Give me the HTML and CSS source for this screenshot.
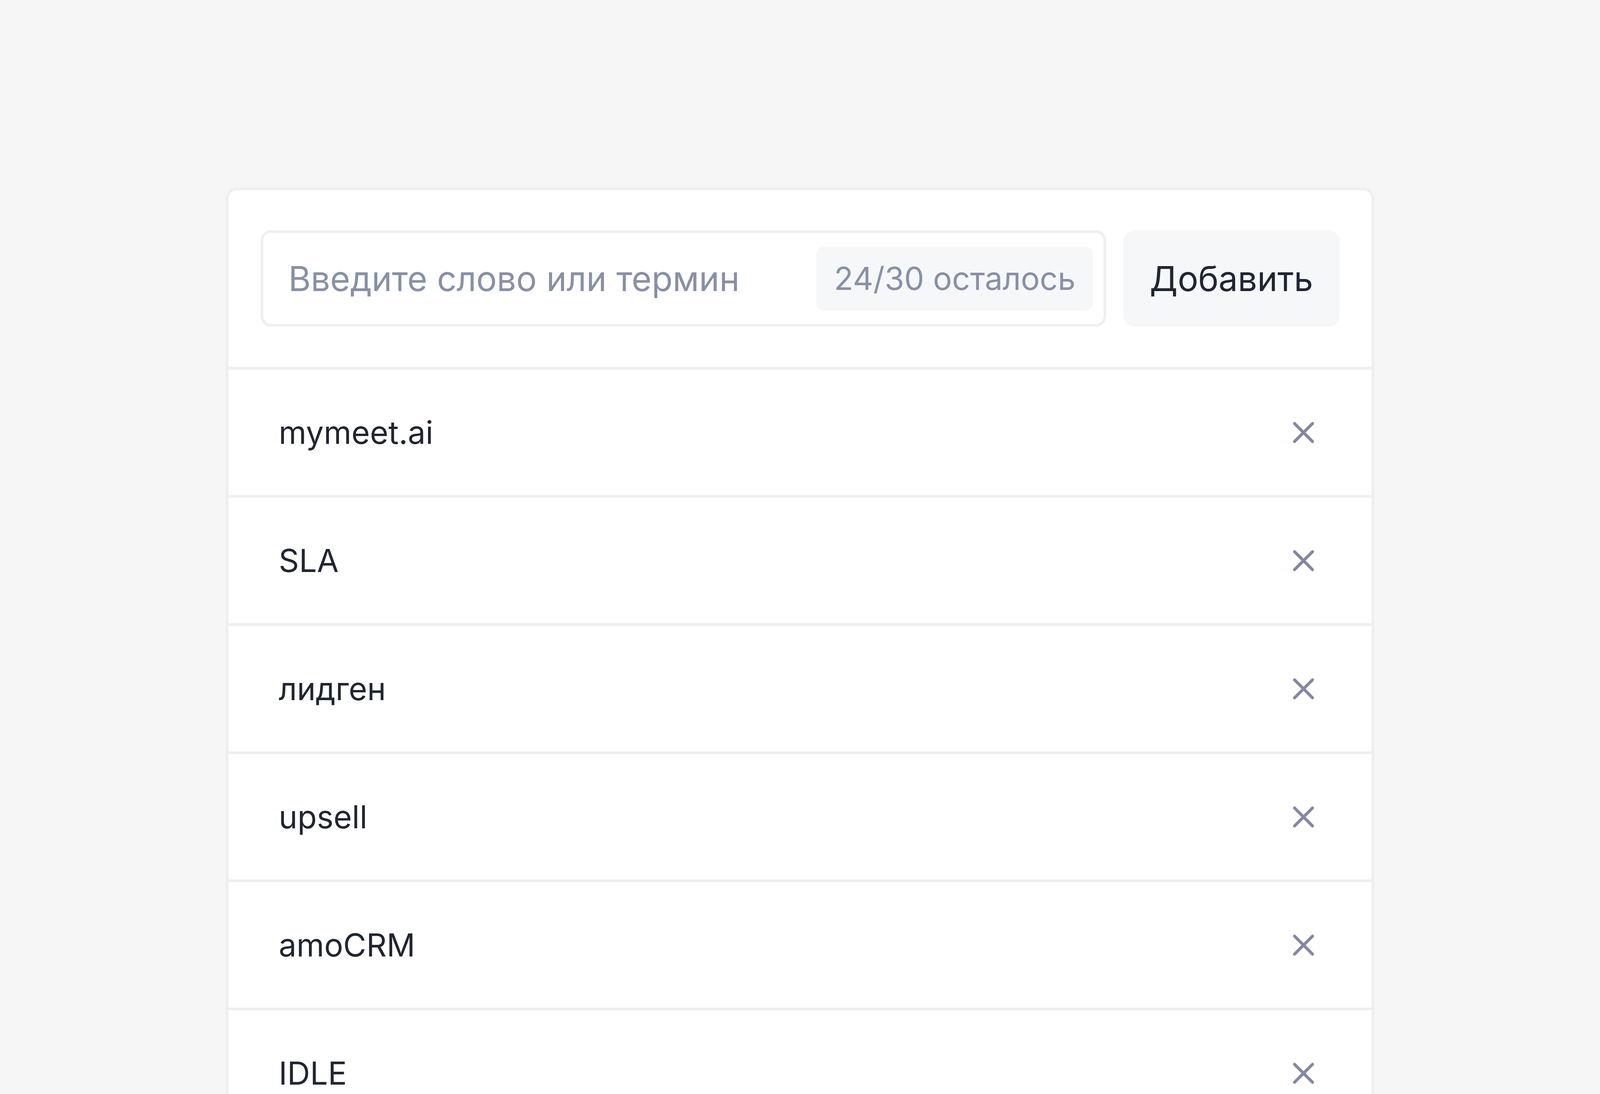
FILE: index.html
```html
<!DOCTYPE html>
<html>
<head>
    <title>Словарь терминов</title>
    <link rel="stylesheet" href="styles.css">
</head>
<body>
    <div class="page">
        <div class="card">
            <div class="card-head">
                <div class="field">
                    <input type="text" class="field-input" placeholder="Введите слово или термин" maxlength="30">
                    <span class="counter">24/30 осталось</span>
                </div>
                <button type="button" class="add-btn">Добавить</button>
            </div>
            <ul class="terms">
                <li class="term"><span class="term-text">mymeet.ai</span><button type="button" class="remove-btn"><svg viewBox="0 0 54 54"><path d="M4 4L50 50M50 4L4 50"/></svg></button></li>
                <li class="term"><span class="term-text">SLA</span><button type="button" class="remove-btn"><svg viewBox="0 0 54 54"><path d="M4 4L50 50M50 4L4 50"/></svg></button></li>
                <li class="term"><span class="term-text">лидген</span><button type="button" class="remove-btn"><svg viewBox="0 0 54 54"><path d="M4 4L50 50M50 4L4 50"/></svg></button></li>
                <li class="term"><span class="term-text">upsell</span><button type="button" class="remove-btn"><svg viewBox="0 0 54 54"><path d="M4 4L50 50M50 4L4 50"/></svg></button></li>
                <li class="term"><span class="term-text">amoCRM</span><button type="button" class="remove-btn"><svg viewBox="0 0 54 54"><path d="M4 4L50 50M50 4L4 50"/></svg></button></li>
                <li class="term"><span class="term-text">IDLE</span><button type="button" class="remove-btn"><svg viewBox="0 0 54 54"><path d="M4 4L50 50M50 4L4 50"/></svg></button></li>
            </ul>
        </div>
    </div>
</body>
</html>
```

FILE: styles.css
```css
html, body {
    margin: 0;
    height: 100%;
    overflow: hidden;
}
body {
    font-family: Inter, "Noto Sans", sans-serif;
    background-color: #f6f6f6;
    color: #1f2632;
}
.page {
    padding-top: 480px;
}
.card {
    width: 71.8vw;
    margin: 0 auto;
    box-sizing: border-box;
    background-color: #ffffff;
    border: 7px solid #efefef;
    border-bottom: none;
    border-radius: 28px 28px 0 0;
}
.card-head {
    display: flex;
    gap: 1.076vw;
    padding: 102px 2.016vw 103px;
}
.field {
    flex: 1;
    min-width: 0;
    display: flex;
    align-items: center;
    height: 247px;
    box-sizing: border-box;
    border: 7px solid #efefef;
    border-radius: 27px;
    padding: 0 0.646vw 0 1.566vw;
}
.field-input {
    flex: 1;
    width: 100%;
    min-width: 0;
    border: none;
    outline: none;
    padding: 0;
    font-family: inherit;
    font-size: 87.75px;
    color: #1f2632;
    background: transparent;
}
.field-input::placeholder {
    color: #8790a6;
}
.counter {
    display: flex;
    align-items: center;
    height: 164px;
    padding: 0 1.096vw;
    background-color: #f6f7f9;
    border-radius: 20px;
    font-size: 81px;
    color: #8790a6;
    white-space: nowrap;
}
.add-btn {
    flex-shrink: 0;
    height: 247px;
    padding: 0 1.644vw;
    border: none;
    border-radius: 27px;
    background-color: #f6f7f9;
    font-family: inherit;
    font-size: 87.75px;
    color: #1f2632;
    cursor: pointer;
}
.terms {
    list-style: none;
    margin: 0;
    padding: 0;
}
.term {
    display: flex;
    align-items: center;
    justify-content: space-between;
    height: 328px;
    box-sizing: border-box;
    border-top: 7px solid #efefef;
    padding: 0 3.6vw 0 3.15vw;
}
.term-text {
    font-size: 81px;
}
.remove-btn {
    display: flex;
    padding: 0;
    border: none;
    background: none;
    cursor: pointer;
}
.remove-btn svg {
    width: 54px;
    height: 54px;
    fill: none;
    stroke: #8089a0;
    stroke-width: 7.5;
    stroke-linecap: round;
}
```
